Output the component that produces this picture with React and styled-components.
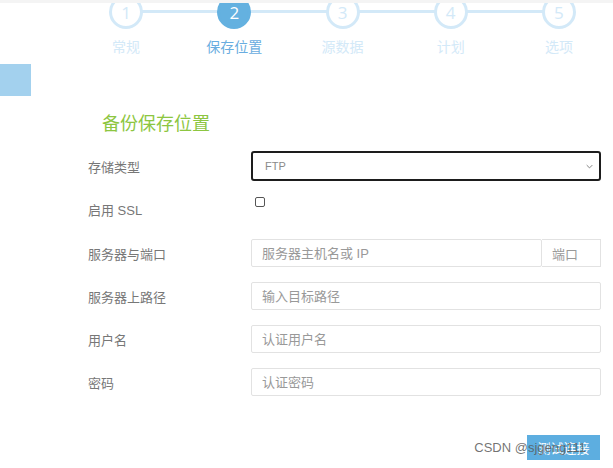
import React from 'react'
import styled, { createGlobalStyle } from 'styled-components'

const GlobalStyle = createGlobalStyle`
  body {
    margin: 0;
    background: #fff;
    font-family: "Liberation Sans", "Noto Sans CJK SC", sans-serif;
  }
`

const steps = ['常规', '保存位置', '源数据', '计划', '选项']

export default function App() {
  return (
    <Page>
      <GlobalStyle />
      <Header>
        <Steps>
          {steps.map((s, i) => (
            <Step key={s} $first={i === 0}>
              <Circle $active={i === 1}>{i + 1}</Circle>
              <StepLabel $active={i === 1}>{s}</StepLabel>
            </Step>
          ))}
        </Steps>
      </Header>
      <SideTab />
      <Title>备份保存位置</Title>
      <Form>
        <Row $h={30} $mb={10}>
          <Label>存储类型</Label>
          <SelectWrap>
            <Select defaultValue="FTP">
              <option>FTP</option>
            </Select>
            <Chevron viewBox="0 0 10 6">
              <path d="M1 1l4 4 4-4" fill="none" stroke="#777" strokeWidth="1.3" />
            </Chevron>
          </SelectWrap>
        </Row>
        <Row $h={36} $mb={12} $top>
          <Label $pt={9}>启用 SSL</Label>
          <Check type="checkbox" />
        </Row>
        <Row $h={28} $mb={15}>
          <Label>服务器与端口</Label>
          <Group>
            <Input placeholder="服务器主机名或 IP" />
            <Addon>端口</Addon>
          </Group>
        </Row>
        <Row $h={28} $mb={15}>
          <Label>服务器上路径</Label>
          <Input placeholder="输入目标路径" />
        </Row>
        <Row $h={28} $mb={15}>
          <Label>用户名</Label>
          <Input placeholder="认证用户名" />
        </Row>
        <Row $h={28} $mb={0}>
          <Label>密码</Label>
          <Input placeholder="认证密码" />
        </Row>
        <Footer>
          <Button>测试连接</Button>
          <Watermark>CSDN @sjgeng111</Watermark>
        </Footer>
      </Form>
    </Page>
  )
}

const Page = styled.div`
  width: 613px;
  height: 468px;
  overflow: hidden;
  position: relative;
`

const Header = styled.div`
  border-top: 3px solid #f4f4f4;
  overflow: hidden;
  height: 54px;
`

const Steps = styled.div`
  display: flex;
  margin-top: -8px;
  padding-left: 72px;
`

const Step = styled.div`
  width: 110px;
  display: flex;
  flex-direction: column;
  align-items: center;
  position: relative;
  &::before {
    content: '';
    display: ${({ $first }) => ($first ? 'none' : 'block')};
    position: absolute;
    left: -50%;
    right: 50%;
    top: 15px;
    height: 3px;
    background: #d3e9f8;
  }
`

const Circle = styled.div`
  position: relative;
  z-index: 1;
  width: 34px;
  height: 34px;
  box-sizing: border-box;
  border-radius: 50%;
  border: 3px solid ${({ $active }) => ($active ? '#64b1e0' : '#d3e9f8')};
  background: ${({ $active }) => ($active ? '#64b1e0' : '#fff')};
  color: ${({ $active }) => ($active ? '#fff' : '#d3e9f8')};
  font-size: 17px;
  display: flex;
  align-items: center;
  justify-content: center;
  font-family: "Open Sans", "Liberation Sans", sans-serif;
`

const StepLabel = styled.div`
  margin-top: 7px;
  font-size: 14px;
  line-height: 20px;
  color: ${({ $active }) => ($active ? '#69ade0' : '#d3e9f8')};
  font-family: "Noto Sans CJK SC", sans-serif;
`

const SideTab = styled.div`
  width: 31px;
  height: 32px;
  margin-top: 7px;
  background: #a3d1ee;
`

const Title = styled.h2`
  margin: 14px 0 0 102px;
  font-weight: normal;
  font-size: 18px;
  line-height: 24px;
  color: #8dc641;
  font-family: "Noto Sans CJK SC", sans-serif;
`

const Form = styled.div`
  margin-top: 17px;
  padding-left: 88px;
  width: 513px;
`

const Row = styled.div`
  display: flex;
  align-items: ${({ $top }) => ($top ? 'flex-start' : 'center')};
  height: ${({ $h }) => $h}px;
  margin-bottom: ${({ $mb }) => $mb}px;
`

const Label = styled.div`
  width: 163px;
  flex-shrink: 0;
  font-size: 13px;
  color: #777;
  padding-top: ${({ $pt }) => $pt || 0}px;
  font-family: "Liberation Sans", "Noto Sans CJK SC", sans-serif;
`

const SelectWrap = styled.div`
  position: relative;
  width: 350px;
  height: 30px;
`

const Select = styled.select`
  appearance: none;
  width: 100%;
  height: 100%;
  box-sizing: border-box;
  border: 2px solid #1d1d1d;
  border-radius: 3px;
  background: #fff;
  padding-left: 12px;
  font-size: 11px;
  color: #8a8a8a;
  font-family: "Liberation Sans", sans-serif;
  outline: none;
`

const Chevron = styled.svg`
  position: absolute;
  right: 8px;
  top: 13px;
  width: 7px;
  height: 5px;
  pointer-events: none;
`

const Check = styled.input`
  appearance: none;
  margin: 6px 0 0 4px;
  width: 10px;
  height: 10px;
  border: 1px solid #555;
  border-radius: 2px;
  background: #fff;
`

const Group = styled.div`
  display: flex;
  width: 350px;
  height: 28px;
`

const Input = styled.input`
  flex: 1;
  width: 350px;
  height: 28px;
  box-sizing: border-box;
  border: 1px solid #e2e2e2;
  border-radius: 2px;
  padding: 0 10px;
  font-size: 13px;
  font-family: "Liberation Sans", "Noto Sans CJK SC", sans-serif;
  outline: none;
  &::placeholder {
    color: #999;
  }
`

const Addon = styled.div`
  width: 59px;
  flex-shrink: 0;
  box-sizing: border-box;
  border: 1px solid #e2e2e2;
  border-left: none;
  display: flex;
  align-items: center;
  padding-left: 10px;
  font-size: 13px;
  color: #999;
  font-family: "Noto Sans CJK SC", sans-serif;
`

const Footer = styled.div`
  position: relative;
  display: flex;
  justify-content: flex-end;
  margin-top: 39px;
  width: 512px;
`

const Button = styled.button`
  width: 73px;
  height: 25px;
  border: none;
  background: #5daee0;
  color: #fff;
  font-size: 13px;
  font-family: "Noto Sans CJK SC", sans-serif;
  padding: 0;
`

const Watermark = styled.div`
  position: absolute;
  right: 14px;
  top: 5px;
  font-size: 13px;
  color: rgba(90, 90, 90, 0.85);
  font-family: "Liberation Sans", sans-serif;
  pointer-events: none;
`
